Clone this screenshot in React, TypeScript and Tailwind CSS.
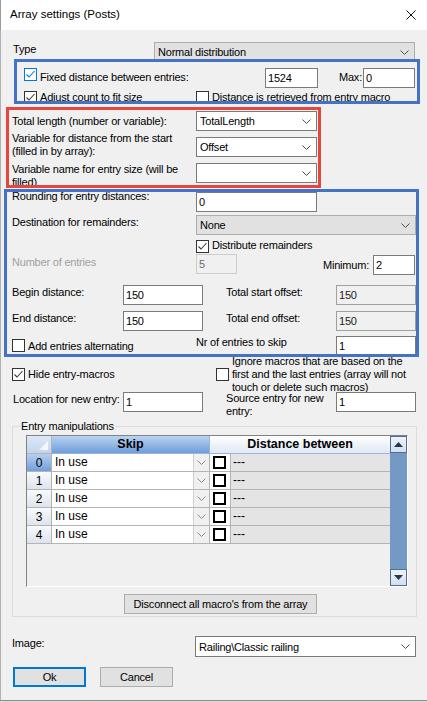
import React from "react";

type Kind = "normal" | "disabled" | "readonly";

function Chevron({ color = "#505050" }: { color?: string }) {
  return (
    <svg width="9" height="5" viewBox="0 0 9 5" className="shrink-0">
      <polyline points="0.5,0.5 4.5,4.5 8.5,0.5" fill="none" stroke={color} strokeWidth="1" />
    </svg>
  );
}

function CheckBox({ checked = false, focus = false, className = "" }: { checked?: boolean; focus?: boolean; className?: string }) {
  const stroke = focus ? "#0078d7" : "#3c3c3c";
  return (
    <div
      className={
        "w-[13px] h-[13px] shrink-0 bg-white border flex items-center justify-center " +
        (focus ? "border-[#0078d7] " : "border-[#333333] ") +
        className
      }
    >
      {checked && (
        <svg width="11" height="11" viewBox="0 0 11 11">
          <polyline points="1.5,5.5 4,8 9.5,2" fill="none" stroke={stroke} strokeWidth="1.1" />
        </svg>
      )}
    </div>
  );
}

function TextBox({ value, className = "", kind = "normal" }: { value: string; className?: string; kind?: Kind }) {
  const look =
    kind === "disabled"
      ? "bg-[#f0f0f0] border-[#cccccc] text-[#6d6d6d]"
      : kind === "readonly"
      ? "bg-[#f0f0f0] border-[#a0a0a0] text-[#1e1e1e]"
      : "bg-white border-[#7a7a7a] text-black";
  return (
    <div className={"h-[20px] shrink-0 border flex items-center pl-[2px] leading-[14px] " + look + " " + className}>
      {value}
    </div>
  );
}

function Combo({ value, className = "", gray = false }: { value: string; className?: string; gray?: boolean }) {
  return (
    <div
      className={
        "h-[20px] shrink-0 border flex items-center justify-between pl-[3px] pr-[5px] leading-[14px] " +
        (gray ? "bg-[#e1e1e1] border-[#adadad] " : "bg-white border-[#7a7a7a] ") +
        className
      }
    >
      <span>{value}</span>
      <Chevron />
    </div>
  );
}

function GridRow({ index, selected }: { index: number; selected?: boolean }) {
  return (
    <div className="flex h-[18px] shrink-0">
      <div
        className={
          "w-[25px] border-r border-b border-[#b4b4b4] flex items-center justify-center text-[12px] " +
          (selected
            ? "bg-[linear-gradient(to_bottom,#b7cff0,#6f9fdb)]"
            : "bg-[linear-gradient(to_bottom,#f8fafd,#dde4ee)]")
        }
      >
        {index}
      </div>
      <div className="w-[158px] border-r border-b border-[#b4b4b4] bg-white flex">
        <div className="flex-1 pl-[3px] text-[12px] leading-[17px]">In use</div>
        <div className="w-[16px] bg-[#f0f0f0] border-l border-[#d0d0d0] flex items-center justify-center">
          <Chevron color="#8a8a8a" />
        </div>
      </div>
      <div className="w-[21px] border-r border-b border-[#b4b4b4] bg-white flex items-center pl-[3px]">
        <div className="w-[13px] h-[13px] border-2 border-black bg-white" />
      </div>
      <div className="flex-1 border-b border-[#b4b4b4] bg-[#e4e4e4] pl-[2px] text-[12px] leading-[17px]">---</div>
    </div>
  );
}

function ScrollButton({ up }: { up?: boolean }) {
  return (
    <div className="w-[17px] h-[17px] border border-[#4f6f98] bg-[linear-gradient(to_bottom,#eef3f9,#d3dfee)] flex items-center justify-center">
      <svg width="9" height="5" viewBox="0 0 9 5">
        <polygon points={up ? "0,5 9,5 4.5,0" : "0,0 9,0 4.5,5"} fill="#27364f" />
      </svg>
    </div>
  );
}

export default function App() {
  return (
    <div className="w-[427px] h-[702px] relative overflow-hidden bg-[#dcdcdc] font-['Liberation_Sans',Arial,sans-serif] text-[11px] tracking-[-0.2px] text-black">
      <div className="h-[701px] flex flex-col border-b border-[#8d8d8d] bg-[#f0f0f0]">
        {/* title bar */}
        <div className="h-[30px] shrink-0 bg-white flex items-center justify-between pl-[10px] pr-[11px] shadow-[inset_1px_0_0_#9a9a9a]">
          <span className="text-[11.5px] tracking-normal">Array settings (Posts)</span>
          <svg width="10" height="10" viewBox="0 0 10 10">
            <path d="M0.5 0.5 L9.5 9.5 M9.5 0.5 L0.5 9.5" stroke="#111" strokeWidth="1" />
          </svg>
        </div>

        {/* dialog body */}
        <div className="flex-1 flex flex-col shadow-[inset_1px_0_0_#b0b0b0]">
          {/* Type */}
          <div className="flex h-[20px] mt-[12px]">
            <div className="w-[154px] pl-[13px] leading-[14px]">Type</div>
            <Combo gray value="Normal distribution" className="w-[261px]" />
          </div>

          {/* Fixed distance */}
          <div className="flex h-[20px] mt-[6px]">
            <CheckBox checked focus className="ml-[24px]" />
            <div className="w-[225px] ml-[3px] mt-[2px] leading-[14px]">Fixed distance between entries:</div>
            <TextBox value="1524" className="w-[53px]" />
            <div className="w-[45px] text-right pr-[1px] mt-[2px] leading-[14px]">Max:</div>
            <TextBox value="0" className="w-[52px]" />
          </div>

          {/* Adjust count */}
          <div className="flex h-[13px] mt-[3px]">
            <CheckBox checked className="ml-[24px]" />
            <div className="w-[156px] ml-[3px] -mt-[1px] leading-[14px] whitespace-nowrap">Adjust count to fit size</div>
            <CheckBox />
            <div className="ml-[3px] -mt-[1px] leading-[14px] whitespace-nowrap">Distance is retrieved from entry macro</div>
          </div>

          {/* Total length */}
          <div className="flex h-[20px] mt-[7px]">
            <div className="w-[196px] pl-[12px] mt-[3px] leading-[14px] whitespace-nowrap">Total length (number or variable):</div>
            <Combo value="TotalLength" className="w-[121px]" />
          </div>

          {/* Distance variable */}
          <div className="flex h-[20px] mt-[6px]">
            <div className="w-[196px] pl-[12px] -mt-[5px] leading-[13px] whitespace-nowrap">
              Variable for distance from the start
              <br />
              (filled in by array):
            </div>
            <Combo value="Offset" className="w-[121px]" />
          </div>

          {/* Entry size variable */}
          <div className="flex h-[20px] mt-[6px]">
            <div className="w-[196px] pl-[12px] leading-[13px] whitespace-nowrap">
              Variable name for entry size (will be
              <br />
              filled)
            </div>
            <Combo value="" className="w-[121px]" />
          </div>

          {/* Rounding */}
          <div className="flex h-[20px] mt-[9px]">
            <div className="w-[196px] pl-[12px] -mt-[3px] leading-[14px] whitespace-nowrap">Rounding for entry distances:</div>
            <TextBox value="0" className="w-[121px]" />
          </div>

          {/* Destination */}
          <div className="flex h-[20px] mt-[3px]">
            <div className="w-[196px] pl-[12px] leading-[14px] whitespace-nowrap">Destination for remainders:</div>
            <Combo gray value="None" className="w-[220px]" />
          </div>

          {/* Distribute */}
          <div className="flex h-[13px] mt-[5px]">
            <CheckBox checked className="ml-[196px]" />
            <div className="ml-[3px] -mt-[2px] leading-[14px] whitespace-nowrap">Distribute remainders</div>
          </div>

          {/* Number of entries */}
          <div className="flex h-[20px] mt-[1px]">
            <div className="w-[196px] pl-[12px] mt-[1px] leading-[14px] text-[#a0a0a0] whitespace-nowrap">Number of entries</div>
            <TextBox kind="disabled" value="5" className="w-[41px]" />
            <div className="w-[136px] text-right pr-[4px] mt-[4px] leading-[14px]">Minimum:</div>
            <TextBox value="2" className="w-[42px] mt-[1px]" />
          </div>

          {/* Begin distance */}
          <div className="flex h-[20px] mt-[11px]">
            <div className="w-[123px] pl-[12px] leading-[14px] whitespace-nowrap">Begin distance:</div>
            <TextBox value="150" className="w-[80px]" />
            <div className="w-[110px] ml-[23px] leading-[14px] whitespace-nowrap">Total start offset:</div>
            <TextBox kind="readonly" value="150" className="w-[80px]" />
          </div>

          {/* End distance */}
          <div className="flex h-[20px] mt-[6px]">
            <div className="w-[123px] pl-[12px] leading-[14px] whitespace-nowrap">End distance:</div>
            <TextBox value="150" className="w-[80px]" />
            <div className="w-[110px] ml-[23px] leading-[14px] whitespace-nowrap">Total end offset:</div>
            <TextBox kind="readonly" value="150" className="w-[80px]" />
          </div>

          {/* Alternating / skip */}
          <div className="flex h-[20px] mt-[5px]">
            <CheckBox className="ml-[12px] mt-[3px]" />
            <div className="w-[168px] ml-[3px] mt-[3px] leading-[14px] whitespace-nowrap">Add entries alternating</div>
            <div className="w-[140px] -mt-[1px] leading-[14px] whitespace-nowrap">Nr of entries to skip</div>
            <TextBox value="1" className="w-[80px]" />
          </div>

          {/* Hide / ignore */}
          <div className="flex h-[13px] mt-[12px]">
            <CheckBox checked className="ml-[12px]" />
            <div className="w-[188px] ml-[3px] -mt-[1px] leading-[14px] whitespace-nowrap">Hide entry-macros</div>
            <CheckBox />
            <div className="ml-[3px] -mt-[13px] leading-[13px] whitespace-nowrap">
              Ignore macros that are based on the
              <br />
              first and the last entries (array will not
              <br />
              touch or delete such macros)
            </div>
          </div>

          {/* New entry */}
          <div className="flex h-[20px] mt-[11px]">
            <div className="w-[123px] pl-[13px] leading-[14px] whitespace-nowrap">Location for new entry:</div>
            <TextBox value="1" className="w-[80px]" />
            <div className="w-[110px] ml-[23px] leading-[13px] whitespace-nowrap">
              Source entry for new
              <br />
              entry:
            </div>
            <TextBox value="1" className="w-[80px]" />
          </div>

          {/* Entry manipulations group */}
          <div className="relative ml-[12px] mt-[14px] w-[405px] h-[191px] shrink-0 border border-[#dcdcdc] flex flex-col">
            <div className="absolute left-[7px] -top-[8px] px-[1px] bg-[#f0f0f0] leading-[14px]">Entry manipulations</div>

            <div className="ml-[13px] mt-[8px] w-[382px] h-[152px] flex border border-[#828282] border-r-white border-b-white bg-[#f0f0f0] tracking-normal">
              <div className="flex-1 flex flex-col">
                <div className="flex h-[18px] shrink-0">
                  <div className="w-[25px] relative border-r border-b border-[#b4b4b4] bg-[linear-gradient(to_bottom,#dde8f6,#c2d5ee)]">
                    <svg width="9" height="9" viewBox="0 0 9 9" className="absolute right-[3px] bottom-[3px]">
                      <polygon points="9,0 9,9 0,9" fill="#f4f8fd" />
                    </svg>
                  </div>
                  <div className="w-[158px] border-r border-b border-[#9db5d6] bg-[linear-gradient(to_bottom,#bcd3f1,#6c9ddb)] flex items-center justify-center font-bold text-[12.5px]">
                    Skip
                  </div>
                  <div className="flex-1 border-b border-[#9db5d6] bg-[linear-gradient(to_bottom,#ffffff,#dfe8f5)] flex items-center justify-center font-bold text-[12.5px]">
                    Distance between
                  </div>
                </div>
                <GridRow index={0} selected />
                <GridRow index={1} />
                <GridRow index={2} />
                <GridRow index={3} />
                <GridRow index={4} />
              </div>
              <div className="w-[17px] bg-[#7499c5] flex flex-col justify-between">
                <ScrollButton up />
                <ScrollButton />
              </div>
            </div>

            <div className="ml-[111px] mt-[7px] w-[193px] h-[20px] border border-[#adadad] bg-[#e1e1e1] flex items-center justify-center leading-[14px]">
              Disconnect all macro's from the array
            </div>
          </div>

          {/* Image */}
          <div className="flex h-[21px] mt-[19px]">
            <div className="w-[195px] pl-[12px] leading-[14px]">Image:</div>
            <Combo value="Railing\Classic railing" className="w-[221px] h-[21px]" />
          </div>

          {/* Buttons */}
          <div className="flex h-[20px] mt-[10px]">
            <div className="ml-[13px] w-[73px] h-[20px] border-2 border-[#0078d7] bg-[#e1e1e1] flex items-center justify-center leading-[14px]">Ok</div>
            <div className="ml-[14px] w-[73px] h-[20px] border border-[#adadad] bg-[#e1e1e1] flex items-center justify-center leading-[14px]">Cancel</div>
          </div>
        </div>
      </div>

      {/* highlight frames drawn over the dialog */}
      <div className="absolute left-[14px] top-[59px] w-[406px] h-[45px] border-[3px] border-[#4472c4] pointer-events-none" />
      <div className="absolute left-[6px] top-[107px] w-[315px] h-[81px] border-[3px] border-[#e8453c] pointer-events-none" />
      <div className="absolute left-[4px] top-[189px] w-[415px] h-[168px] border-[3px] border-[#4472c4] pointer-events-none" />
    </div>
  );
}
